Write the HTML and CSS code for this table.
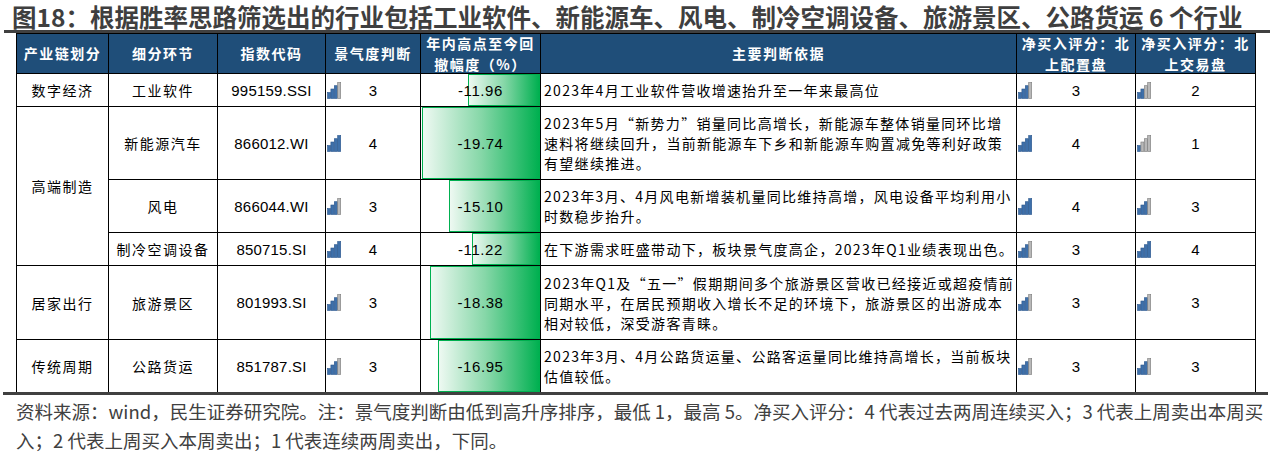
FILE: index.html
```html
<!DOCTYPE html>
<html lang="zh-CN">
<head>
<meta charset="utf-8">
<title>图18</title>
<link rel="stylesheet" href="styles.css">
</head>
<body>
<svg class="defs" width="0" height="0" aria-hidden="true">
  <symbol id="sig1" viewBox="0 0 14 17">
    <rect class="on" x="0.5" y="10.5" width="3" height="6"/>
    <rect class="off" x="3.9" y="7" width="3" height="9.5"/>
    <rect class="off" x="7.3" y="3.7" width="3" height="12.8"/>
    <rect class="off" x="10.7" y="0.5" width="3" height="16"/>
  </symbol>
  <symbol id="sig2" viewBox="0 0 14 17">
    <rect class="on" x="0.5" y="10.5" width="3" height="6"/>
    <rect class="on" x="3.9" y="7" width="3" height="9.5"/>
    <rect class="off" x="7.3" y="3.7" width="3" height="12.8"/>
    <rect class="off" x="10.7" y="0.5" width="3" height="16"/>
  </symbol>
  <symbol id="sig3" viewBox="0 0 14 17">
    <rect class="on" x="0.5" y="10.5" width="3" height="6"/>
    <rect class="on" x="3.9" y="7" width="3" height="9.5"/>
    <rect class="on" x="7.3" y="3.7" width="3" height="12.8"/>
    <rect class="off" x="10.7" y="0.5" width="3" height="16"/>
  </symbol>
  <symbol id="sig4" viewBox="0 0 14 17">
    <rect class="on" x="0.5" y="10.5" width="3" height="6"/>
    <rect class="on" x="3.9" y="7" width="3" height="9.5"/>
    <rect class="on" x="7.3" y="3.7" width="3" height="12.8"/>
    <rect class="on" x="10.7" y="0.5" width="3" height="16"/>
  </symbol>
</svg>

<div class="title">图18：根据胜率思路筛选出的行业包括工业软件、新能源车、风电、制冷空调设备、旅游景区、公路货运 6 个行业</div>

<div class="grid">
  <div class="hd">产业链划分</div>
  <div class="hd">细分环节</div>
  <div class="hd">指数代码</div>
  <div class="hd">景气度判断</div>
  <div class="hd">年内高点至今回<br>撤幅度（%）</div>
  <div class="hd">主要判断依据</div>
  <div class="hd">净买入评分：北<br>上配置盘</div>
  <div class="hd">净买入评分：北<br>上交易盘</div>

  <!-- 数字经济 -->
  <div class="c">数字经济</div>
  <div class="c">工业软件</div>
  <div class="c code">995159.SSI</div>
  <div class="sigc"><svg class="sig" viewBox="0 0 14 17"><use href="#sig3" width="14" height="17"/></svg><span class="num">3</span></div>
  <div class="barc"><div class="bar" style="width:72px"></div><span class="val">-11.96</span></div>
  <div class="txt">2023年4月工业软件营收增速抬升至一年来最高位</div>
  <div class="sigc"><svg class="sig" viewBox="0 0 14 17"><use href="#sig3" width="14" height="17"/></svg><span class="num">3</span></div>
  <div class="sigc"><svg class="sig" viewBox="0 0 14 17"><use href="#sig2" width="14" height="17"/></svg><span class="num">2</span></div>

  <!-- 高端制造 -->
  <div class="c span3">高端制造</div>
  <div class="c">新能源汽车</div>
  <div class="c code">866012.WI</div>
  <div class="sigc"><svg class="sig" viewBox="0 0 14 17"><use href="#sig4" width="14" height="17"/></svg><span class="num">4</span></div>
  <div class="barc"><div class="bar" style="width:118px"></div><span class="val">-19.74</span></div>
  <div class="txt">2023年5月“新势力”销量同比高增长，新能源车整体销量同环比增<br>速料将继续回升，当前新能源车下乡和新能源车购置减免等利好政策<br>有望继续推进。</div>
  <div class="sigc"><svg class="sig" viewBox="0 0 14 17"><use href="#sig4" width="14" height="17"/></svg><span class="num">4</span></div>
  <div class="sigc"><svg class="sig" viewBox="0 0 14 17"><use href="#sig1" width="14" height="17"/></svg><span class="num">1</span></div>

  <div class="c">风电</div>
  <div class="c code">866044.WI</div>
  <div class="sigc"><svg class="sig" viewBox="0 0 14 17"><use href="#sig3" width="14" height="17"/></svg><span class="num">3</span></div>
  <div class="barc"><div class="bar" style="width:91px"></div><span class="val">-15.10</span></div>
  <div class="txt">2023年3月、4月风电新增装机量同比维持高增，风电设备平均利用小<br>时数稳步抬升。</div>
  <div class="sigc"><svg class="sig" viewBox="0 0 14 17"><use href="#sig4" width="14" height="17"/></svg><span class="num">4</span></div>
  <div class="sigc"><svg class="sig" viewBox="0 0 14 17"><use href="#sig3" width="14" height="17"/></svg><span class="num">3</span></div>

  <div class="c">制冷空调设备</div>
  <div class="c code">850715.SI</div>
  <div class="sigc"><svg class="sig" viewBox="0 0 14 17"><use href="#sig4" width="14" height="17"/></svg><span class="num">4</span></div>
  <div class="barc"><div class="bar" style="width:68px"></div><span class="val">-11.22</span></div>
  <div class="txt">在下游需求旺盛带动下，板块景气度高企，2023年Q1业绩表现出色。</div>
  <div class="sigc"><svg class="sig" viewBox="0 0 14 17"><use href="#sig3" width="14" height="17"/></svg><span class="num">3</span></div>
  <div class="sigc"><svg class="sig" viewBox="0 0 14 17"><use href="#sig4" width="14" height="17"/></svg><span class="num">4</span></div>

  <!-- 居家出行 -->
  <div class="c">居家出行</div>
  <div class="c">旅游景区</div>
  <div class="c code">801993.SI</div>
  <div class="sigc"><svg class="sig" viewBox="0 0 14 17"><use href="#sig3" width="14" height="17"/></svg><span class="num">3</span></div>
  <div class="barc"><div class="bar" style="width:110px"></div><span class="val">-18.38</span></div>
  <div class="txt">2023年Q1及“五一”假期期间多个旅游景区营收已经接近或超疫情前<br>同期水平，在居民预期收入增长不足的环境下，旅游景区的出游成本<br>相对较低，深受游客青睐。</div>
  <div class="sigc"><svg class="sig" viewBox="0 0 14 17"><use href="#sig3" width="14" height="17"/></svg><span class="num">3</span></div>
  <div class="sigc"><svg class="sig" viewBox="0 0 14 17"><use href="#sig3" width="14" height="17"/></svg><span class="num">3</span></div>

  <!-- 传统周期 -->
  <div class="c">传统周期</div>
  <div class="c">公路货运</div>
  <div class="c code">851787.SI</div>
  <div class="sigc"><svg class="sig" viewBox="0 0 14 17"><use href="#sig3" width="14" height="17"/></svg><span class="num">3</span></div>
  <div class="barc"><div class="bar" style="width:102px"></div><span class="val">-16.95</span></div>
  <div class="txt">2023年3月、4月公路货运量、公路客运量同比维持高增长，当前板块<br>估值较低。</div>
  <div class="sigc"><svg class="sig" viewBox="0 0 14 17"><use href="#sig3" width="14" height="17"/></svg><span class="num">3</span></div>
  <div class="sigc"><svg class="sig" viewBox="0 0 14 17"><use href="#sig3" width="14" height="17"/></svg><span class="num">3</span></div>
</div>
<div class="rule"></div>

<p class="note">资料来源：wind，民生证券研究院。注：景气度判断由低到高升序排序，最低 1，最高 5。净买入评分：4 代表过去两周连续买入；3 代表上周卖出本周买<br>入；2 代表上周买入本周卖出；1 代表连续两周卖出，下同。</p>
</body>
</html>
```

FILE: styles.css
```css
html, body {
  margin: 0;
  padding: 0;
  background: #ffffff;
}

body {
  width: 1275px;
  font-family: "Noto Sans CJK SC", "Liberation Sans", sans-serif;
  color: #000;
}

.defs {
  position: absolute;
  width: 0;
  height: 0;
  overflow: hidden;
}

.title {
  height: 30px;
  margin: 0 5px 0 4px;
  padding-left: 8px;
  border-bottom: 3px solid #404040;
  font-size: 24.5px;
  font-weight: 700;
  line-height: 34px;
  color: #3f3f3f;
  white-space: nowrap;
}

.grid {
  display: grid;
  width: 1240px;
  margin-left: 16px;
  box-sizing: border-box;
  padding: 1px 1px 0 1px;
  gap: 1px;
  background: #000;
  grid-template-columns: 91px 108px 107px 94px 119px 475px 118px 119px;
  grid-template-rows: 39px 32px 72px 52px 32px 73px 52px;
}

.grid > div {
  background: #fff;
}

.hd {
  background: #1f4e79 !important;
  color: #fff;
  font-weight: 700;
  font-size: 14px;
  letter-spacing: 1.5px;
  line-height: 21px;
  display: flex;
  align-items: center;
  justify-content: center;
  text-align: center;
}

.c {
  display: flex;
  align-items: center;
  justify-content: center;
  font-size: 14px;
  letter-spacing: 1.5px;
}

.span3 {
  grid-row: span 3;
}

.code {
  font-family: "Liberation Sans", sans-serif;
  font-size: 15px;
  letter-spacing: 0.2px;
}

.sigc {
  display: grid;
  grid-template-columns: 1fr auto 1fr;
  align-items: center;
}

.sig {
  display: block;
  width: 14px;
  height: 17px;
  margin-left: 1px;
  justify-self: start;
  overflow: visible;
}

.on {
  fill: #3e70aa;
  stroke: #2a568c;
  stroke-width: 0.6;
}

.off {
  fill: #b8b8b8;
  stroke: #7a7a7a;
  stroke-width: 0.6;
}

.num {
  grid-column: 2;
  font-family: "Liberation Sans", sans-serif;
  font-size: 15px;
}

.barc {
  display: grid;
  grid-template-columns: 1fr;
  grid-template-rows: 1fr;
}

.bar {
  grid-area: 1 / 1;
  justify-self: end;
  box-sizing: border-box;
  border: 1px solid #00b050;
  background: linear-gradient(to right, #eef9f2 0%, #86d7a8 50%, #00b050 100%);
}

.val {
  grid-area: 1 / 1;
  justify-self: center;
  align-self: center;
  font-family: "Liberation Sans", sans-serif;
  font-size: 15px;
  letter-spacing: 0.6px;
}

.txt {
  display: flex;
  align-items: center;
  padding: 0 4px 0 3px;
  font-size: 14px;
  letter-spacing: 1.3px;
  line-height: 20px;
  white-space: nowrap;
}

.rule {
  height: 3px;
  margin: 0 7px 0 3px;
  background: #404040;
}

.note {
  margin: 0;
  padding: 2px 0 0 16px;
  font-size: 18.5px;
  line-height: 29px;
  color: #404040;
  white-space: nowrap;
}
```
